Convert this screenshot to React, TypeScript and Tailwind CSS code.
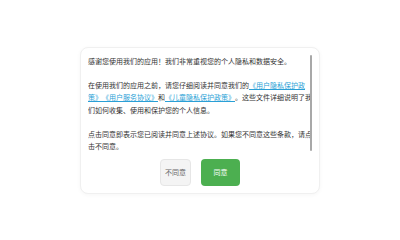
import React from "react";

export default function App() {
  const link = "text-[#2a9fd6] underline";
  return (
    <div
      className="w-[400px] h-[240px] bg-white flex items-center justify-center"
      style={{ fontFamily: '"Noto Sans CJK SC", "Noto Sans", sans-serif' }}
    >
      <div className="w-[240px] h-[147px] bg-white rounded-[8px] border border-[#f0f0f0] shadow-[0_1px_4px_rgba(0,0,0,0.04)] px-[7px] pt-[7px] pb-[7px] flex flex-col">
        <div className="relative w-[224px] h-[98px] overflow-hidden">
          <div className="w-[224px] text-[7px] leading-[12.25px] text-[#333] [text-spacing-trim:space-all]">
            <p className="mb-[12.25px]">感谢您使用我们的应用！我们非常重视您的个人隐私和数据安全。</p>
            <p className="mb-[12.25px]">
              在使用我们的应用之前，请您仔细阅读并同意我们的
              <span className={link}>《用户隐私保护政策》《用户服务协议》</span>和
              <span className={link}>《儿童隐私保护政策》</span>。这些文件详细说明了我们如何收集、使用和保护您的个人信息。
            </p>
            <p>点击同意即表示您已阅读并同意上述协议。如果您不同意这些条款，请点击不同意。</p>
          </div>
          <div className="absolute right-0 top-0 w-[2px] h-[96px] bg-white">
            <div className="w-[2px] h-[96px] bg-[#a8a8a8] rounded-[1px]" />
          </div>
        </div>
        <div className="flex justify-center gap-[10px] mt-[7px]">
          <button className="w-[31px] h-[27px] rounded-[4px] bg-[#f4f4f4] border border-[#e6e6e6] text-[7px] text-[#666] flex items-center justify-center">
            不同意
          </button>
          <button className="w-[39px] h-[27px] rounded-[4px] bg-[#4caf50] text-[7px] text-white flex items-center justify-center">
            同意
          </button>
        </div>
      </div>
    </div>
  );
}
